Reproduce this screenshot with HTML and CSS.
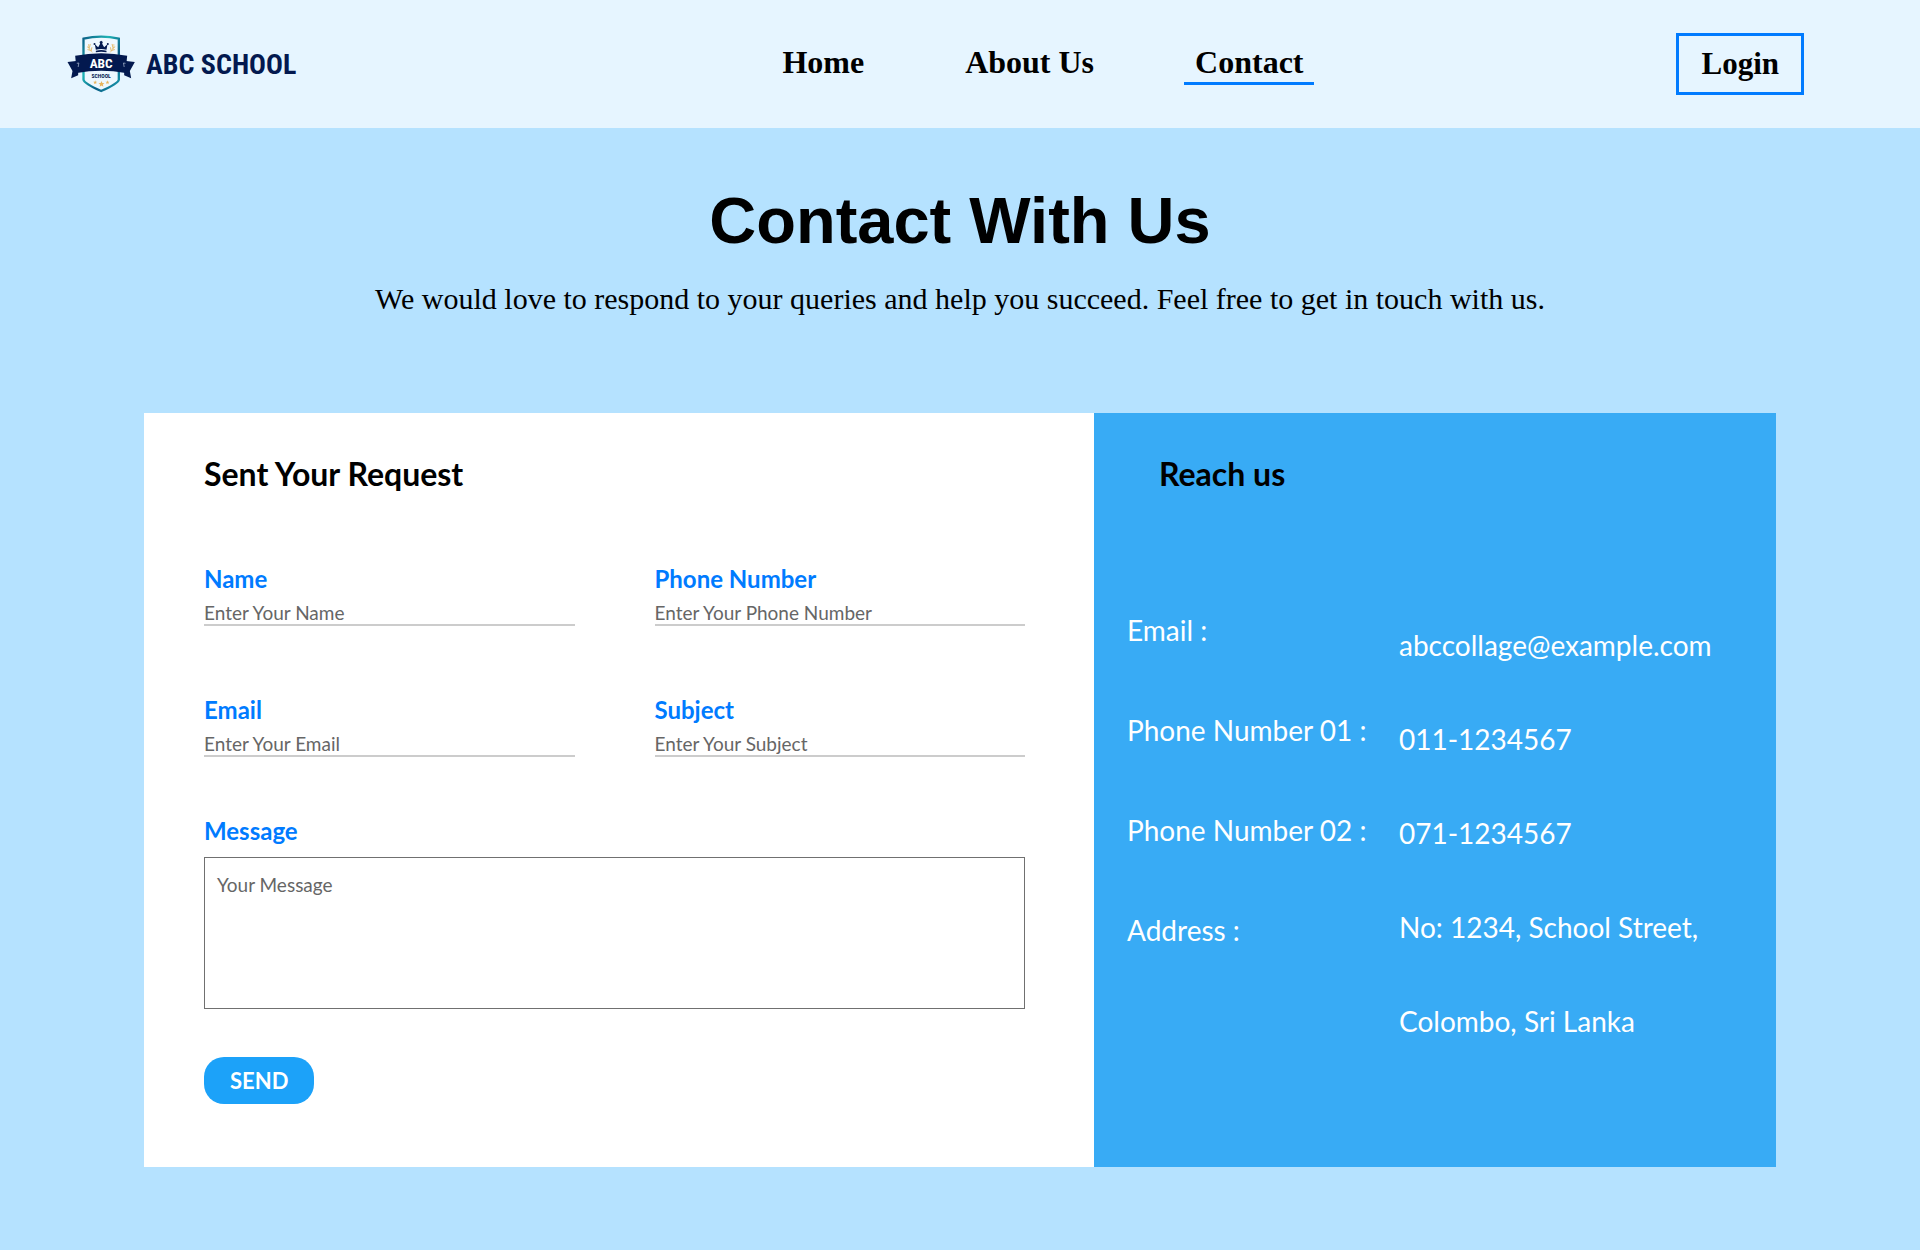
FILE: index.html
```html
<!DOCTYPE html>
<html lang="en">
<head>
<meta charset="utf-8">
<meta name="viewport" content="width=device-width, initial-scale=1">
<title>Contact | ABC School</title>
<link rel="stylesheet" href="styles.css">
</head>
<body>
<header class="site-header">
  <a class="brand" href="#">
    <svg class="brand-crest" viewBox="36 30 206 174" aria-hidden="true">
      <defs>
        <linearGradient id="rim" x1="0" y1="0" x2="1" y2="1">
          <stop offset="0" stop-color="#0b5f86"/>
          <stop offset=".35" stop-color="#1fb3b5"/>
          <stop offset=".65" stop-color="#0a5d86"/>
          <stop offset="1" stop-color="#1c9fb0"/>
        </linearGradient>
      </defs>
      <path d="M85 41Q138 29 191 41V164Q188 176 138 198Q88 176 85 164Z" fill="#eef8ff" stroke="url(#rim)" stroke-width="7"/>
      <path d="M119 58l10 9 6-11-2-5 5-4 5 4-2 5 6 11 10-9-3 16q-16-4-32 0zM122 77q16-4 32 0v5q-16-4-32 0z" fill="#03194f"/>
      <circle cx="118" cy="57" r="3" fill="#03194f"/><circle cx="158" cy="57" r="3" fill="#03194f"/>
      <path d="M112 82Q98 74 100 57M164 82Q178 74 176 57" fill="none" stroke="#e5bd70" stroke-width="2"/>
      <path d="M97 66l7 4M98 74l9 2M105 58l-2 9M110 68l-2 9M179 66l-7 4M178 74l-9 2M171 58l2 9M166 68l2 9" stroke="#e5bd70" stroke-width="3" stroke-linecap="round"/>
      <path d="M37 111l32-4v44l-21 9 4-22zM239 111l-32-4v44l21 9-4-22z" fill="#03194f"/>
      <path d="M60 92Q138 77 216 92L211 144Q138 131 65 144Z" fill="#03194f"/>
      <path d="M65 115l6-1-2 12M211 115l-6-1 2 12" fill="none" stroke="#b9c8dc" stroke-width="2"/>
      <text class="crest-name" x="138" y="128" text-anchor="middle">ABC</text>
      <text class="crest-sub" x="138" y="159" text-anchor="middle">SCHOOL</text>
      <path d="M139 168l2.600 6 6.400.500-5 4.200 1.600 6.300-5.600-3.400-5.600 3.400 1.600-6.300-5-4.200 6.400-.5zM120 166l1.600 4 4.400.300-3.400 2.800 1 4.300-3.600-2.400-3.600 2.400 1-4.300-3.400-2.800 4.400-.3zM157 166l1.600 4 4.400.300-3.400 2.800 1 4.300-3.600-2.400-3.600 2.400 1-4.300-3.400-2.800 4.400-.3z" fill="#e8b45c"/>
    </svg>
    <span class="brand-name">ABC SCHOOL</span>
  </a>
  <nav class="site-nav">
    <a class="nav-link" href="#">Home</a>
    <a class="nav-link" href="#">About Us</a>
    <a class="nav-link nav-link-active" href="#">Contact</a>
  </nav>
  <button class="login" type="button">Login</button>
</header>
<main>
  <section class="intro">
    <h1 class="intro-title">Contact With Us</h1>
    <p class="intro-text">We would love to respond to your queries and help you succeed. Feel free to get in touch with us.</p>
  </section>
  <div class="card">
    <section class="request">
      <h2 class="panel-title">Sent Your Request</h2>
      <form class="form">
        <div class="field">
          <label class="label" for="name">Name</label>
          <input class="input" id="name" type="text" placeholder="Enter Your Name">
        </div>
        <div class="field">
          <label class="label" for="phone">Phone Number</label>
          <input class="input" id="phone" type="tel" placeholder="Enter Your Phone Number">
        </div>
        <div class="field">
          <label class="label" for="email">Email</label>
          <input class="input" id="email" type="email" placeholder="Enter Your Email">
        </div>
        <div class="field">
          <label class="label" for="subject">Subject</label>
          <input class="input" id="subject" type="text" placeholder="Enter Your Subject">
        </div>
        <div class="field field-wide">
          <label class="label" for="message">Message</label>
          <textarea class="message" id="message" placeholder="Your Message"></textarea>
        </div>
        <button class="send" type="submit">SEND</button>
      </form>
    </section>
    <section class="reach">
      <h2 class="panel-title reach-title">Reach us</h2>
      <div class="details">
        <div class="detail-names">
          <div>Email :</div>
          <div>Phone Number 01 :</div>
          <div>Phone Number 02 :</div>
          <div>Address :</div>
        </div>
        <div class="detail-values">
          <div>abccollage@example.com</div>
          <div>011-1234567</div>
          <div>071-1234567</div>
          <div>No: 1234, School Street,</div>
          <div>Colombo, Sri Lanka</div>
        </div>
      </div>
    </section>
  </div>
</main>
</body>
</html>
```

FILE: styles.css
```css
* {
  box-sizing: border-box;
}

body {
  margin: 0;
  background: #b5e2ff;
  color: #000;
  font-family: Lato, "Open Sans", sans-serif;
}

h1, h2, p {
  margin: 0;
}

.site-header {
  display: grid;
  grid-template-columns: 59fr auto 41fr;
  align-items: center;
  min-height: 128px;
  padding: 0 116px 0 67px;
  background: #e6f5ff;
  font-family: "Liberation Serif", serif;
}

.brand {
  display: flex;
  align-items: center;
  gap: 10px;
  color: #03194f;
  text-decoration: none;
}

.brand-crest {
  width: 69px;
  height: 58px;
}

.crest-name {
  font: bold 40px "Roboto Condensed", "Liberation Sans", sans-serif;
  fill: #fff;
}

.crest-sub {
  font: bold 17px "Roboto Condensed", "Liberation Sans", sans-serif;
  fill: #03194f;
}

.brand-name {
  font: bold 28px "Roboto Condensed", "Liberation Sans", sans-serif;
  white-space: nowrap;
}

.site-nav {
  display: flex;
  gap: 79px;
}

.nav-link {
  padding: 0 11px 2px;
  border-bottom: 3px solid transparent;
  color: #000;
  font-size: 32px;
  font-weight: bold;
  line-height: 36px;
  text-decoration: none;
}

.nav-link-active {
  border-bottom-color: #007bff;
}

.login {
  justify-self: end;
  padding: 10px 22px;
  border: 3px solid #007bff;
  background: transparent;
  color: #000;
  font: bold 31px/36px "Liberation Serif", serif;
}

.intro {
  padding: 53px 24px 96px;
  text-align: center;
}

.intro-title {
  font: bold 65px/80px "Liberation Sans", sans-serif;
}

.intro-text {
  margin-top: 20px;
  font: 30px/36px "Liberation Serif", serif;
}

.card {
  display: grid;
  grid-template-columns: 950fr 682fr;
  width: 85%;
  margin: 0 auto 83px;
}

.request {
  padding: 39px 69px 63px 60px;
  background: #fff;
}

.panel-title {
  font-size: 32px;
  line-height: 44px;
}

.form {
  display: grid;
  grid-template-columns: 1fr 1fr;
  column-gap: 80px;
  margin-top: 67px;
}

.field {
  display: flex;
  flex-direction: column;
  margin-bottom: 68px;
}

.field-wide {
  grid-column: 1 / -1;
  margin: -10px 0 48px;
}

.label {
  color: #007bff;
  font-size: 24px;
  font-weight: bold;
  line-height: 32px;
}

.input {
  width: 100%;
  height: 29px;
  margin-top: 2px;
  padding: 4px 0 0;
  border: 0;
  border-bottom: 2px solid #ccc;
  background: transparent;
  font: 19px/23px Lato, sans-serif;
}

.input::placeholder,
.message::placeholder {
  color: #666;
  opacity: 1;
}

.message {
  height: 152px;
  margin-top: 10px;
  padding: 15px 12px;
  border: 1px solid #707070;
  background: #fff;
  font: 19px/24px Lato, sans-serif;
  resize: none;
}

.send {
  justify-self: start;
  padding: 8px 26px;
  border: 0;
  border-radius: 20px;
  background: #1ca2f9;
  color: #fff;
  font: bold 22px/31px Lato, sans-serif;
}

.reach {
  padding: 39px 33px;
  background: #38abf5;
  color: #fff;
}

.reach-title {
  padding-left: 32px;
  color: #000;
}

.details {
  display: grid;
  grid-template-columns: 272fr 344fr;
  margin-top: 84px;
  font-size: 28px;
  white-space: nowrap;
}

.detail-names {
  line-height: 100px;
}

.detail-values {
  padding-top: 18px;
  line-height: 94px;
}
```
